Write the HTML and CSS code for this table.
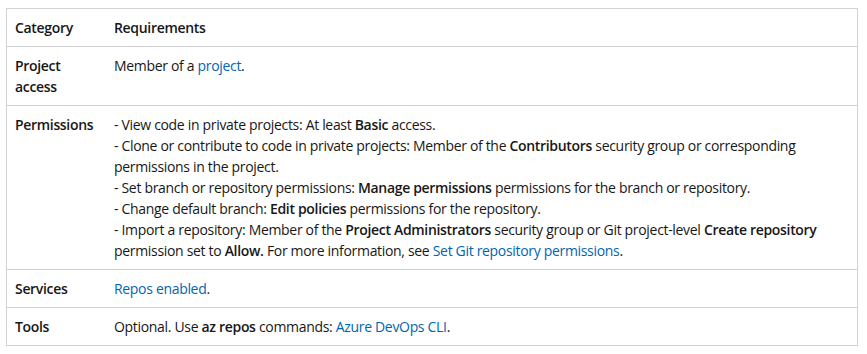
FILE: index.html
```html
<!DOCTYPE html>
<html lang="en">
<head>
    <meta charset="UTF-8">
    <title>Prerequisites</title>
    <link rel="stylesheet" href="styles.css">
</head>
<body class="page">
<table class="req-table">
    <thead>
    <tr>
        <th class="col-cat">Category</th>
        <th>Requirements</th>
    </tr>
    </thead>
    <tbody>
    <tr>
        <td><strong>Project access</strong></td>
        <td>Member of a <a href="#">project</a>.</td>
    </tr>
    <tr>
        <td><strong>Permissions</strong></td>
        <td>
            - View code in private projects: At least <strong>Basic</strong> access.<br>
            - Clone or contribute to code in private projects: Member of the <strong>Contributors</strong> security group or corresponding permissions in the project.<br>
            - Set branch or repository permissions: <strong>Manage permissions</strong> permissions for the branch or repository.<br>
            - Change default branch: <strong>Edit policies</strong> permissions for the repository.<br>
            - Import a repository: Member of the <strong>Project Administrators</strong> security group or Git project-level <strong>Create repository</strong> permission set to <strong>Allow.</strong> For more information, see <a href="#">Set Git repository permissions</a>.
        </td>
    </tr>
    <tr>
        <td><strong>Services</strong></td>
        <td><a href="#">Repos enabled</a>.</td>
    </tr>
    <tr>
        <td><strong>Tools</strong></td>
        <td>Optional. Use <strong>az repos</strong> commands: <a href="#">Azure DevOps CLI</a>.</td>
    </tr>
    </tbody>
</table>
</body>
</html>
```

FILE: styles.css
```css
.page {
    margin: 0;
    padding: 8px 9px 8px 6px;
    background: #ffffff;
    color: #171717;
    font-family: "Open Sans", "Noto Sans", sans-serif;
    font-size: 14px;
    line-height: 21px;
    letter-spacing: -0.32px;
}

.req-table {
    width: 852px;
    border-collapse: collapse;
    table-layout: fixed;
    border: 1px solid #d2d2d2;
}

.req-table th,
.req-table td {
    border-top: 1px solid #d2d2d2;
    border-bottom: 1px solid #d2d2d2;
    padding: 8px 8px;
    text-align: left;
    vertical-align: top;
}

.req-table th {
    font-weight: 600;
}

.req-table .col-cat {
    width: 83px;
}

.req-table strong {
    font-weight: 600;
}

.req-table a {
    color: #0065b3;
    text-decoration: none;
}
```
